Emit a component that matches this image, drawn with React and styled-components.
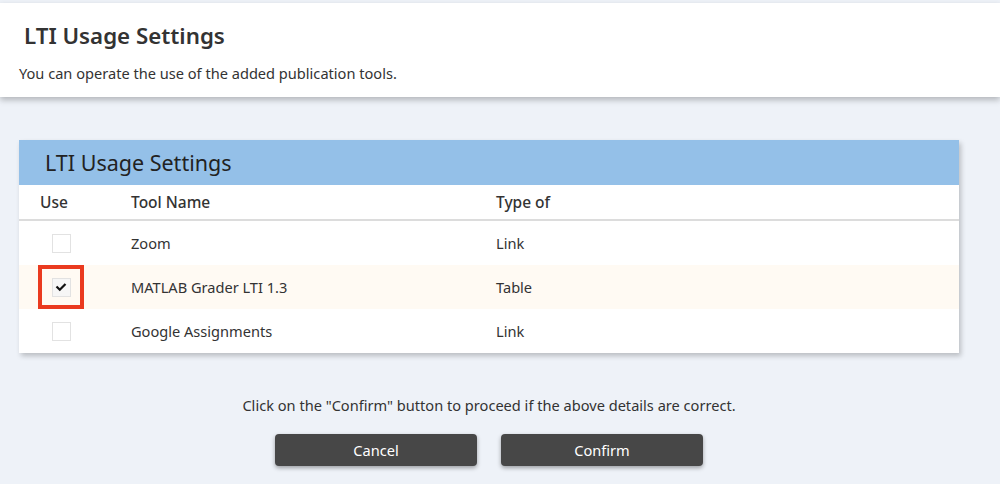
import React, { useState } from 'react';
import styled, { createGlobalStyle } from 'styled-components';

const GlobalStyle = createGlobalStyle`
  html, body {
    margin: 0;
    padding: 0;
    background: #eef2f8;
    font-family: "Noto Sans", "Noto Sans CJK JP", sans-serif;
    color: #333;
  }
  * { box-sizing: border-box; }
`

const Page = styled.div`
  padding-top: 3px;
  min-height: 484px;
`

const PageHeader = styled.header`
  background: #fff;
  height: 94px;
  padding: 18px 19px 0;
  box-shadow: 0 3px 6px rgba(0, 0, 0, 0.25);
  position: relative;
  z-index: 1;
`

const PageTitle = styled.h1`
  margin: 0 0 0 5px;
  font-size: 22.3px;
  font-weight: 600;
  line-height: 30px;
  color: #333;
`

const Lead = styled.p`
  margin: 12px 0 0;
  font-size: 14.6px;
  line-height: 20px;
`

const Main = styled.main`
  width: 940px;
  margin-left: 19px;
  padding-top: 43px;
`

const Card = styled.section`
  background: #fff;
  box-shadow: 2px 3px 5px rgba(0, 0, 0, 0.22);
`

const CardTitle = styled.h2`
  margin: 0;
  height: 45px;
  padding-left: 26px;
  display: flex;
  align-items: center;
  background: #94c0e8;
  font-size: 21.5px;
  font-weight: 400;
  color: #222;
`

const Table = styled.table`
  width: 100%;
  border-collapse: collapse;
`

const Th = styled.th`
  height: 35px;
  padding: 0 0 0 ${p => p.$pad || 0}px;
  width: ${p => p.$w ? `${p.$w}px` : 'auto'};
  text-align: left;
  font-size: 15.5px;
  font-weight: 500;
  color: #333;
  border-bottom: 2px solid #dcdcdc;
`

const Tr = styled.tr`
  background: ${p => p.$active ? '#fffaf3' : '#fff'};
  & + & td { border-top: 1px solid #ebebeb; }
`

const Td = styled.td`
  height: 44px;
  padding: 0 0 0 ${p => p.$pad || 0}px;
  font-size: 14.6px;
  color: #333;
`

const CheckCell = styled.div`
  width: 46px;
  height: 44px;
  margin-left: 19px;
  display: flex;
  align-items: center;
  justify-content: center;
  border: 4px solid ${p => p.$marked ? '#ea3a1f' : 'transparent'};
`

const Box = styled.span`
  width: 19px;
  height: 19px;
  display: flex;
  align-items: center;
  justify-content: center;
  border: 1px solid #e2e2e2;
  background: ${p => p.$checked ? '#f6f6f6' : '#fff'};
  cursor: pointer;
`

const Note = styled.p`
  margin: 42px 0 0;
  text-align: center;
  font-size: 14.6px;
  line-height: 20px;
`

const Actions = styled.div`
  margin-top: 19px;
  display: flex;
  justify-content: center;
  gap: 24px;
`

const Button = styled.button`
  width: 202px;
  height: 32px;
  border: none;
  border-radius: 4px;
  background: #474747;
  color: #fff;
  font-family: inherit;
  font-size: 14.6px;
  box-shadow: 0 2px 4px rgba(0, 0, 0, 0.35);
  cursor: pointer;
`

const tools = [
  { name: 'Zoom', type: 'Link', use: false },
  { name: 'MATLAB Grader LTI 1.3', type: 'Table', use: true },
  { name: 'Google Assignments', type: 'Link', use: false },
];

function Check() {
  return (
    <svg width="12" height="10" viewBox="0 0 12 10">
      <path d="M1.5 4.5 L4.8 7.8 L10.5 2" fill="none" stroke="#111" strokeWidth="2.2" />
    </svg>
  );
}

export default function App() {
  const [rows, setRows] = useState(tools);
  const toggle = i => setRows(rows.map((r, j) => j === i ? { ...r, use: !r.use } : r));

  return (
    <Page>
      <GlobalStyle />
      <PageHeader>
        <PageTitle>LTI Usage Settings</PageTitle>
        <Lead>You can operate the use of the added publication tools.</Lead>
      </PageHeader>
      <Main>
        <Card>
          <CardTitle>LTI Usage Settings</CardTitle>
          <Table>
            <thead>
              <tr>
                <Th $w={112} $pad={21}>Use</Th>
                <Th $w={365}>Tool Name</Th>
                <Th>Type of</Th>
              </tr>
            </thead>
            <tbody>
              {rows.map((r, i) => (
                <Tr key={r.name} $active={r.use}>
                  <Td>
                    <CheckCell $marked={r.use}>
                      <Box $checked={r.use} onClick={() => toggle(i)}>
                        {r.use && <Check />}
                      </Box>
                    </CheckCell>
                  </Td>
                  <Td>{r.name}</Td>
                  <Td>{r.type}</Td>
                </Tr>
              ))}
            </tbody>
          </Table>
        </Card>
        <Note>Click on the "Confirm" button to proceed if the above details are correct.</Note>
        <Actions>
          <Button>Cancel</Button>
          <Button>Confirm</Button>
        </Actions>
      </Main>
    </Page>
  );
}
